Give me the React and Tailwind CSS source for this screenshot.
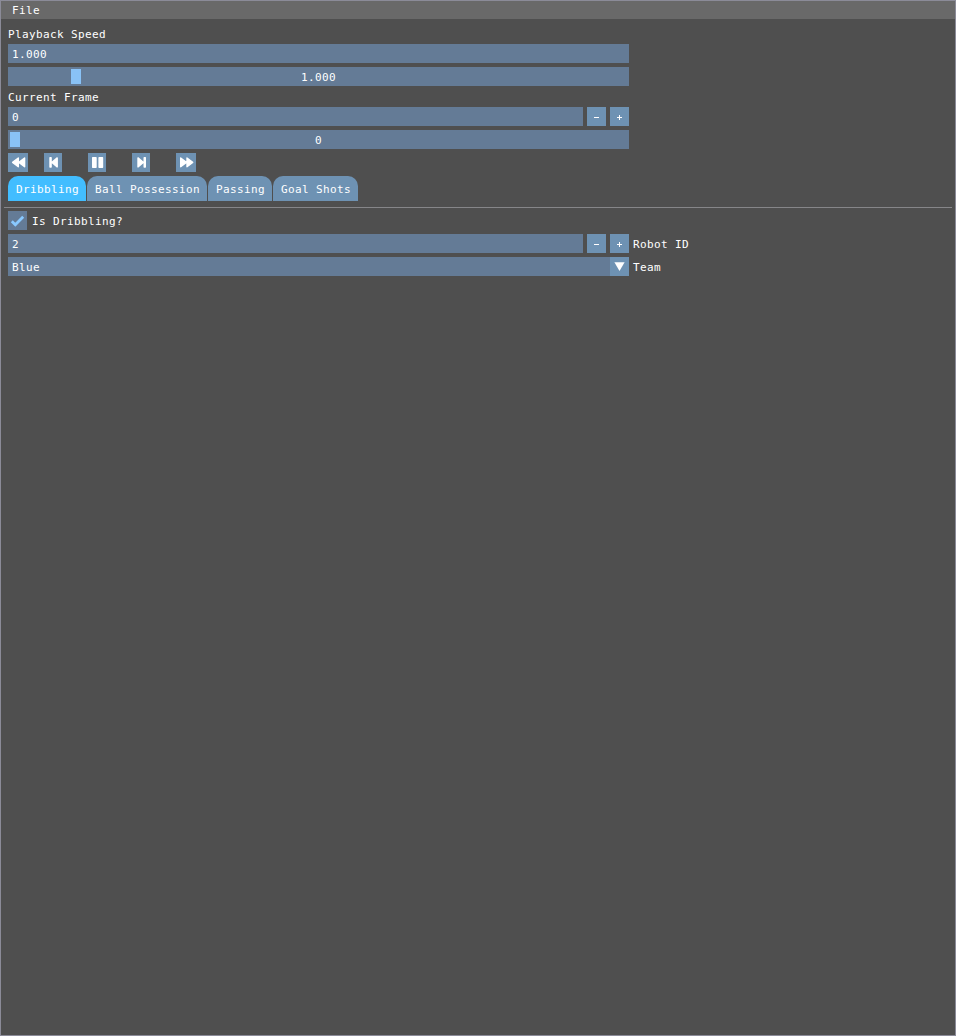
import React from "react";

const BUTTON = "h-[19px] shrink-0 bg-[#6e92b3] flex items-center justify-center";
const FRAME = "h-[19px] bg-[#647b96] flex items-center";

function Label({ children }) {
  return <div className="h-[19px] pt-1">{children}</div>;
}

function TextInput({ value }) {
  return <div className={`${FRAME} w-[621px] pl-1 pt-px`}>{value}</div>;
}

function Slider({ value, position }) {
  return (
    <div className={`${FRAME} relative w-[621px] pt-px justify-center`}>
      <div className="absolute top-[2px] h-[15px] w-[10px] bg-[#89c2f6]" style={{ left: position }} />
      {value}
    </div>
  );
}

function Stepper({ value, label }) {
  return (
    <div className="flex gap-1">
      <div className={`${FRAME} w-[575px] pl-1 pt-px`}>{value}</div>
      <div className={`${BUTTON} w-[19px]`}>
        <svg width="19" height="19" shapeRendering="crispEdges" fill="#fff">
          <path d="M7 10h5v1H7z" />
        </svg>
      </div>
      <div className={`${BUTTON} w-[19px]`}>
        <svg width="19" height="19" shapeRendering="crispEdges" fill="#fff">
          <path d="M7 10h5v1H7zM9 8h1v5H9z" />
        </svg>
      </div>
      {label && <span className="flex items-center pt-px">{label}</span>}
    </div>
  );
}

function IconButton({ wide, d }) {
  return (
    <div className={`${BUTTON} ${wide ? "w-5" : "w-[18px]"}`}>
      <svg
        width={wide ? 20 : 18}
        height="19"
        fill="#fff"
        stroke="#fff"
        strokeWidth="1.4"
        strokeLinejoin="round"
      >
        <path d={d} />
      </svg>
    </div>
  );
}

function Tab({ children, width, active }) {
  return (
    <div
      className={`h-[25px] rounded-t-[10px] pl-2 pt-px flex items-center ${width} ${
        active ? "bg-[#42bdff]" : "bg-[#6e92b3]"
      }`}
    >
      {children}
    </div>
  );
}

export default function App() {
  return (
    <div className="w-[956px] h-[1036px] border border-[#8b8b98] bg-[#4f4f4f] text-white font-['DejaVu_Sans_Mono',monospace] text-[11px] leading-[13px] tracking-[0.378px] whitespace-pre overflow-hidden">
      <div className="h-[18px] bg-[#696969] pl-[11px] flex items-center">File</div>

      <div className="pl-[7px] pt-[5px]">
        <Label>Playback Speed</Label>
        <div className="pt-px flex flex-col gap-1">
          <TextInput value="1.000" />
          <Slider value="1.000" position={63} />
        </div>
        <div className="pt-[1px]">
          <Label>Current Frame</Label>
        </div>
        <div className="pt-px flex flex-col gap-1">
          <Stepper value="0" />
          <Slider value="0" position={2} />
        </div>

        <div className="flex pt-1">
          <IconButton wide d="M10.3 5v8.8L4.6 9.4zM16.6 5v8.8L10.9 9.4z" />
          <div className="w-4" />
          <IconButton d="M6 4.7h1.1v9.4H6zM13.2 4.9v9L8 9.4z" />
          <div className="w-[26px]" />
          <IconButton d="M4.7 4.7h3.3v9.5H4.7zM11.1 4.7h3.4v9.5H11.1z" />
          <div className="w-[26px]" />
          <IconButton d="M12.2 4.7h1.1v9.4h-1.1zM6 4.9v9L11.2 9.4z" />
          <div className="w-[26px]" />
          <IconButton wide d="M4.7 5v8.8L10.4 9.4zM11 5v8.8L16.7 9.4z" />
        </div>

        <div className="flex gap-px pt-1">
          <Tab active width="w-[78px]">Dribbling</Tab>
          <Tab width="w-[120px]">Ball Possession</Tab>
          <Tab width="w-16">Passing</Tab>
          <Tab width="w-[85px]">Goal Shots</Tab>
        </div>
      </div>

      <div className="mt-[6px] ml-[3px] w-[948px] h-px bg-[#868689]" />

      <div className="pl-[7px] pt-[3px] flex flex-col gap-1">
        <div className="flex gap-[5px] h-[19px] items-center">
          <div className={`${FRAME} w-[19px]`}>
            <svg width="19" height="19" fill="none" stroke="#89c9ff" strokeWidth="2.8">
              <path d="M3.8 10.2L7.3 13.7L15.2 5.8" />
            </svg>
          </div>
          <span className="pt-px">Is Dribbling?</span>
        </div>
        <Stepper value="2" label="Robot ID" />
        <div className="flex gap-1">
          <div className="flex">
            <div className={`${FRAME} w-[602px] pl-1 pt-px`}>Blue</div>
            <div className={`${BUTTON} w-[19px]`}>
              <svg width="19" height="19" fill="#fff">
                <path d="M4.4 5.2h10.2L9.5 14z" />
              </svg>
            </div>
          </div>
          <span className="flex items-center pt-px">Team</span>
        </div>
      </div>
    </div>
  );
}
